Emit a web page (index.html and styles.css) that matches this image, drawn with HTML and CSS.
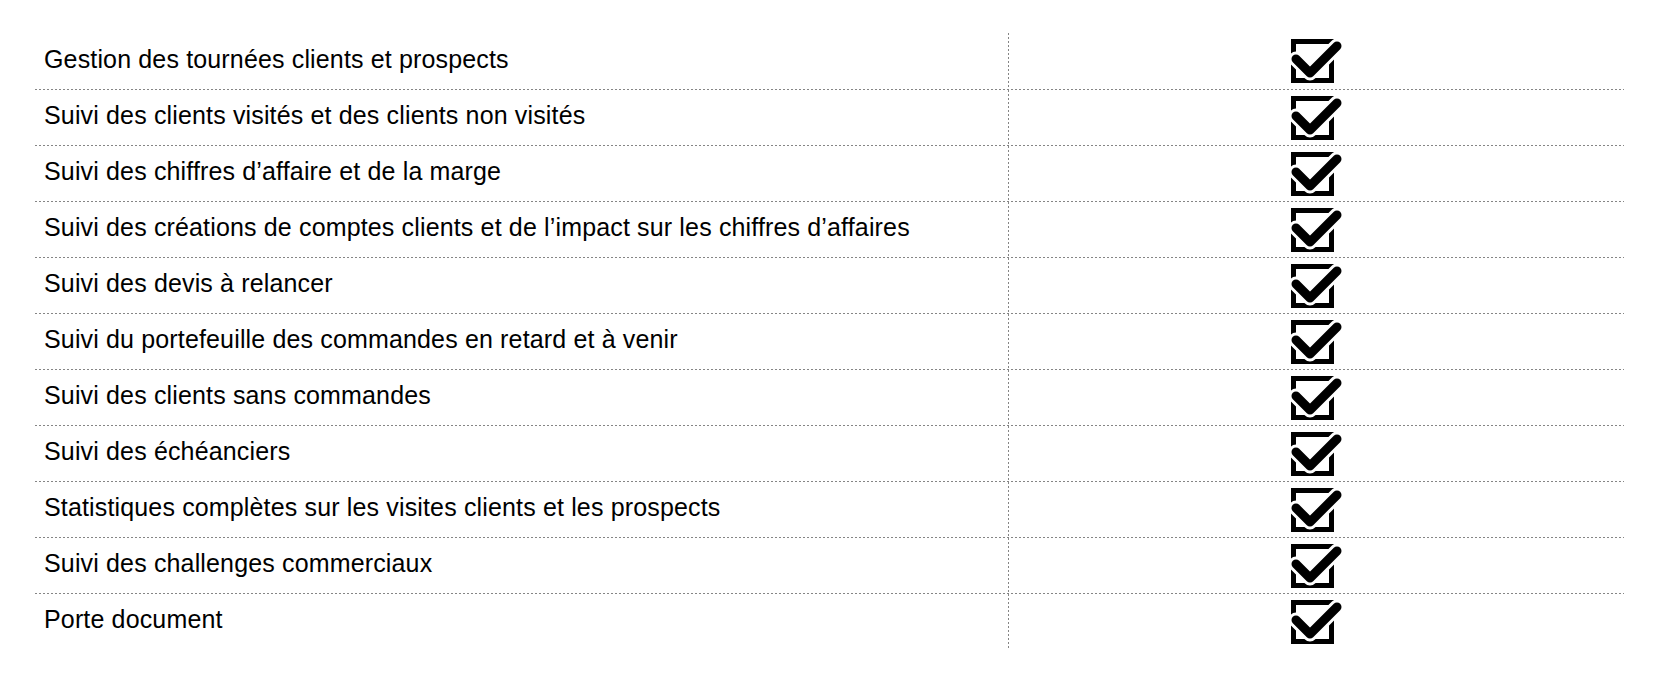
FILE: index.html
```html
<!DOCTYPE html>
<html lang="fr">
<head>
<meta charset="utf-8">
<title>Fonctionnalités</title>
<link rel="stylesheet" href="styles.css">
</head>
<body>
<div class="page">
  <div class="table">
    <div class="row"><div class="label">Gestion des tournées clients et prospects</div><div class="mark"><svg class="check" viewBox="-3 0 58 46" width="58" height="46"><use href="#chk"/></svg></div></div>
    <div class="row"><div class="label">Suivi des clients visités et des clients non visités</div><div class="mark"><svg class="check" viewBox="-3 0 58 46" width="58" height="46"><use href="#chk"/></svg></div></div>
    <div class="row"><div class="label">Suivi des chiffres d’affaire et de la marge</div><div class="mark"><svg class="check" viewBox="-3 0 58 46" width="58" height="46"><use href="#chk"/></svg></div></div>
    <div class="row"><div class="label">Suivi des créations de comptes clients et de l’impact sur les chiffres d’affaires</div><div class="mark"><svg class="check" viewBox="-3 0 58 46" width="58" height="46"><use href="#chk"/></svg></div></div>
    <div class="row"><div class="label">Suivi des devis à relancer</div><div class="mark"><svg class="check" viewBox="-3 0 58 46" width="58" height="46"><use href="#chk"/></svg></div></div>
    <div class="row"><div class="label">Suivi du portefeuille des commandes en retard et à venir</div><div class="mark"><svg class="check" viewBox="-3 0 58 46" width="58" height="46"><use href="#chk"/></svg></div></div>
    <div class="row"><div class="label">Suivi des clients sans commandes</div><div class="mark"><svg class="check" viewBox="-3 0 58 46" width="58" height="46"><use href="#chk"/></svg></div></div>
    <div class="row"><div class="label">Suivi des échéanciers</div><div class="mark"><svg class="check" viewBox="-3 0 58 46" width="58" height="46"><use href="#chk"/></svg></div></div>
    <div class="row"><div class="label">Statistiques complètes sur les visites clients et les prospects</div><div class="mark"><svg class="check" viewBox="-3 0 58 46" width="58" height="46"><use href="#chk"/></svg></div></div>
    <div class="row"><div class="label">Suivi des challenges commerciaux</div><div class="mark"><svg class="check" viewBox="-3 0 58 46" width="58" height="46"><use href="#chk"/></svg></div></div>
    <div class="row"><div class="label">Porte document</div><div class="mark"><svg class="check" viewBox="-3 0 58 46" width="58" height="46"><use href="#chk"/></svg></div></div>
  </div>
</div>
<svg class="defs" width="0" height="0" aria-hidden="true">
  <defs>
    <g id="chk">
      <rect x="2.5" y="2.5" width="38" height="39" fill="none" stroke="#000" stroke-width="5"/>
      <path d="M5 20 L19 34 L46 7" fill="none" stroke="#fff" stroke-width="15" stroke-linecap="round" stroke-linejoin="round"/>
      <path d="M5 20 L19 34 L46 7" fill="none" stroke="#000" stroke-width="9" stroke-linecap="round" stroke-linejoin="round"/>
    </g>
  </defs>
</svg>
</body>
</html>
```

FILE: styles.css
```css
html, body {
  margin: 0;
  padding: 0;
  background: #fff;
}

body {
  font-family: "Liberation Sans", Arial, sans-serif;
  color: #000;
}

.page {
  padding: 33px 0 0 35px;
}

.table {
  width: 1589px;
  display: flex;
  flex-direction: column;
}

.row {
  display: grid;
  grid-template-columns: 973px 1fr;
  height: 56px;
  box-sizing: border-box;
  padding-bottom: 1px;
  background-image: repeating-linear-gradient(to right, #858585 0 2px, transparent 2px 4px);
  background-size: 100% 1px;
  background-position: left bottom;
  background-repeat: no-repeat;
}

.row:first-child {
  height: 57px;
}

.row:last-child {
  background-image: none;
}

.label {
  font-size: 25px;
  letter-spacing: 0.15px;
  line-height: 29px;
  padding: 11px 0 0 9px;
  white-space: nowrap;
}

.row:first-child .label {
  padding-top: 12px;
}

.mark {
  display: flex;
  justify-content: center;
  align-items: flex-start;
  padding-top: 6px;
  padding-left: 1px;
  background-image: repeating-linear-gradient(to bottom, #858585 0 2px, transparent 2px 4px);
  background-size: 1px 100%;
  background-position: left top;
  background-repeat: no-repeat;
}

.check {
  display: block;
}

.defs {
  position: absolute;
  width: 0;
  height: 0;
  overflow: hidden;
}
```
